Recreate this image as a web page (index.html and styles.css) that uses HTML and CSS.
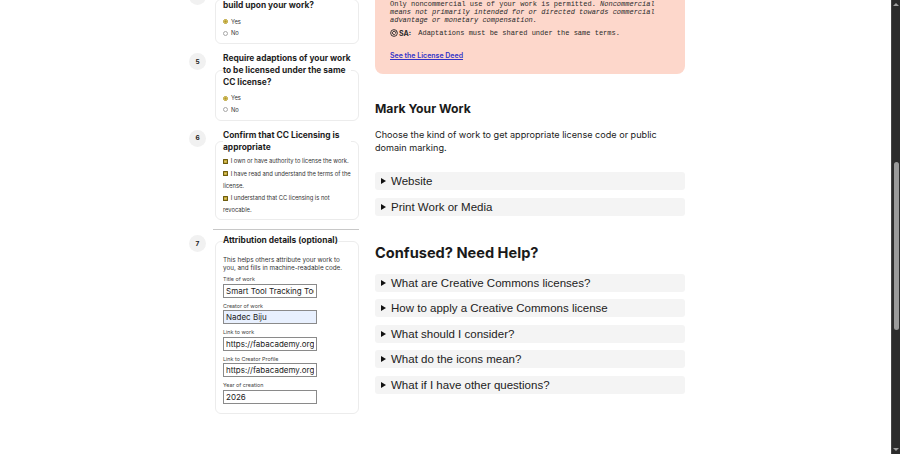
FILE: index.html
```html
<!DOCTYPE html>
<html lang="en">
<head>
  <meta charset="UTF-8">
  <meta name="viewport" content="width=device-width, initial-scale=1">
  <title>License Chooser</title>
  <link rel="stylesheet" href="styles.css">
</head>
<body>
  <div class="screen">
    <div class="viewport">
      <main class="chooser">

        <section class="steps">
          <div class="step">
            <span class="num">4</span>
            <fieldset class="card">
              <legend>Allow others to remix and<br>build upon your work?</legend>
              <label class="opt"><input type="radio" name="adapt" checked> Yes</label>
              <label class="opt"><input type="radio" name="adapt"> No</label>
            </fieldset>
          </div>

          <div class="step">
            <span class="num">5</span>
            <fieldset class="card">
              <legend>Require adaptions of your work to be licensed under the same CC license?</legend>
              <label class="opt"><input type="radio" name="share" checked> Yes</label>
              <label class="opt"><input type="radio" name="share"> No</label>
            </fieldset>
          </div>

          <div class="step">
            <span class="num">6</span>
            <fieldset class="card confirm">
              <legend>Confirm that CC Licensing is appropriate</legend>
              <label class="opt check"><input type="checkbox" checked> I own or have authority to license the work.</label>
              <label class="opt check"><input type="checkbox" checked> I have read and understand the terms of the license.</label>
              <label class="opt check"><input type="checkbox" checked> I understand that CC licensing is not revocable.</label>
            </fieldset>
          </div>

          <hr class="sep">

          <div class="step">
            <span class="num">7</span>
            <fieldset class="card attrib">
              <legend>Attribution details (optional)</legend>
              <p class="hint">This helps others attribute your work to you, and fills in machine-readable code.</p>
              <label class="field">Title of work<input type="text" value="Smart Tool Tracking Tool"></label>
              <label class="field">Creator of work<input type="text" class="filled" value="Nadec Biju"></label>
              <label class="field">Link to work<input type="text" value="https://fabacademy.org"></label>
              <label class="field">Link to Creator Profile<input type="text" value="https://fabacademy.org"></label>
              <label class="field">Year of creation<input type="text" value="2026"></label>
            </fieldset>
          </div>
        </section>

        <section class="result">
          <div class="deed">
            <p class="cond"><span class="ic"><svg viewBox="0 0 10 10"><circle cx="5" cy="5" r="4.2"/><circle cx="5" cy="3" r="0.9" class="fill"/><path d="M3.8 4.5h2.4v2H5.6v1.8H4.4V6.5H3.8z" class="fill"/></svg></span><b>BY:</b> Credit must be given to you, the creator.</p>
            <p class="cond nc"><span class="ic"><svg viewBox="0 0 10 10"><circle cx="5" cy="5" r="4.2"/><text x="5" y="6.8" class="fill">$</text></svg></span><b>NC:</b></p>
            <p class="text">Only noncommercial use of your work is permitted. <i>Noncommercial means not primarily intended for or directed towards commercial advantage or monetary compensation.</i></p>
            <p class="cond sa"><span class="ic"><svg viewBox="0 0 10 10"><circle cx="5" cy="5" r="4.2"/><path d="M6.9 5.6A2 2 0 1 1 6.9 4.2"/><path d="M6 3.3l1 1.1 0.9-1.3" /></svg></span><b>SA:</b> Adaptations must be shared under the same terms.</p>
            <a class="deed-link" href="#">See the License Deed</a>
          </div>

          <h2>Mark Your Work</h2>
          <p class="lead">Choose the kind of work to get appropriate license code or public domain marking.</p>
          <details><summary>Website</summary></details>
          <details><summary>Print Work or Media</summary></details>

          <h2 class="help">Confused? Need Help?</h2>
          <details><summary>What are Creative Commons licenses?</summary></details>
          <details><summary>How to apply a Creative Commons license</summary></details>
          <details><summary>What should I consider?</summary></details>
          <details><summary>What do the icons mean?</summary></details>
          <details><summary>What if I have other questions?</summary></details>
        </section>

      </main>
    </div>

    <div class="scrollbar">
      <span class="arrow up"></span>
      <span class="track"><span class="thumb"></span></span>
      <span class="arrow down"></span>
    </div>
  </div>
</body>
</html>
```

FILE: styles.css
```css
html, body {
  margin: 0;
  height: 100%;
}
body {
  font-family: Inter, "Noto Sans", sans-serif;
  color: #222;
  background: #fff;
  overflow: hidden;
}
.screen {
  display: flex;
  height: 454px;
}
.viewport {
  flex: 1;
  overflow: hidden;
}
.chooser {
  display: grid;
  grid-template-columns: 170px 310px;
  column-gap: 16px;
  padding-left: 189px;
  align-items: start;
}

/* left column: steps */
.steps {
  margin-top: -12px;
}
.step {
  display: flex;
  gap: 9px;
  align-items: flex-start;
  margin-bottom: 9px;
}
.num {
  flex: none;
  width: 17px;
  height: 17px;
  border-radius: 50%;
  background: #f1f1f1;
  font-size: 6.5px;
  font-weight: bold;
  display: flex;
  align-items: center;
  justify-content: center;
}
.card {
  flex: 1;
  min-width: 0;
  margin: 0;
  padding: 0 7px 4px;
  border: 1px solid #ececec;
  border-radius: 6px;
}
.card legend {
  padding: 0;
  font-size: 8.4px;
  font-weight: bold;
  line-height: 11.8px;
  color: #1e1e1e;
}
.opt {
  display: flex;
  align-items: center;
  gap: 2px;
  font-size: 5.8px;
  line-height: 11.7px;
  color: #333;
}
.card legend + .opt {
  margin-top: 4px;
}
.opt input {
  appearance: none;
  width: 5px;
  height: 5px;
  margin: 0 1px 0 0;
  flex: none;
  box-sizing: border-box;
  border: 0.7px solid #a8a8a8;
  border-radius: 50%;
  background: #fff;
}
.opt input[type="radio"]:checked {
  border-color: #b59b25;
  background: radial-gradient(circle, #b59b25 0 45%, #f4e7a8 55%);
}
.check {
  display: block;
  line-height: 12.2px;
}
.card.confirm legend + .opt {
  margin-top: 2px;
}
.card.confirm {
  padding-bottom: 3px;
}
.check input[type="checkbox"] {
  display: inline-block;
  vertical-align: -0.5px;
  border: 0.6px solid #6d5c10;
  border-radius: 0.5px;
  background: #c2a52c url("data:image/svg+xml,%3Csvg xmlns='http://www.w3.org/2000/svg' viewBox='0 0 10 10'%3E%3Cpath d='M2.2 5.2l2 2 3.8-4.2' fill='none' stroke='white' stroke-width='1.8'/%3E%3C/svg%3E") center / 100% 100% no-repeat;
}
.sep {
  margin: 0 0 5px 24px;
  border: 0;
  border-top: 1px solid #c8c8c8;
}
.attrib {
  padding-bottom: 9px;
}
.hint {
  margin: 9px 0 4px;
  font-size: 6.3px;
  line-height: 8px;
  color: #333;
}
.field {
  display: block;
  font-size: 5.4px;
  line-height: 7.5px;
  color: #444;
  margin-bottom: 5px;
}
.field input {
  display: block;
  box-sizing: border-box;
  width: 94px;
  height: 14px;
  margin: 0;
  padding: 0 2px;
  border: 1px solid #8a8a8a;
  border-radius: 0;
  font-family: Inter, "Noto Sans", sans-serif;
  font-size: 8px;
  color: #222;
  background: #fff;
}
.field input.filled {
  background: #e8f0fe;
}
.field:last-child {
  margin-bottom: 0;
}

/* right column */
.result {
  margin-top: -35px;
}
.deed {
  background: #fdd7cb;
  border-radius: 0 0 8px 8px;
  padding: 10px 15px 14px;
  font-family: "Liberation Mono", monospace;
  font-size: 7px;
  color: #2a2a2a;
}
.deed p {
  margin: 0;
}
.cond {
  display: flex;
  align-items: center;
  height: 10px;
  white-space: pre;
}
.cond b {
  font-family: Inter, sans-serif;
  margin-right: 3px;
}
.cond.nc {
  margin-top: 5px;
}
.cond.sa {
  margin-top: 4px;
}
.ic {
  width: 8px;
  height: 8px;
  margin-right: 1px;
}
.ic svg {
  display: block;
  width: 8px;
  height: 8px;
  fill: none;
  stroke: #222;
  stroke-width: 1.1;
}
.ic .fill {
  fill: #222;
  stroke: none;
  font-size: 5px;
  text-anchor: middle;
  font-family: "Liberation Sans", sans-serif;
  font-weight: bold;
}
.text {
  line-height: 8px;
}
.deed-link {
  display: block;
  margin-top: 14px;
  font-family: Inter, sans-serif;
  font-weight: 600;
  font-size: 7px;
  line-height: 8px;
  color: #3434c8;
}
h2 {
  margin: 27px 0 0;
  font-size: 12.2px;
  line-height: 16px;
  color: #1a1a1a;
}
.lead {
  margin: 11px 0 18px;
  font-size: 9.1px;
  line-height: 13px;
  color: #222;
}
details {
  margin-bottom: 7.5px;
  background: #f4f4f4;
  border-radius: 3px;
}
summary {
  display: flex;
  align-items: center;
  height: 18px;
  padding-left: 6px;
  font-family: "Liberation Sans", Arial, sans-serif;
  font-size: 11.5px;
  color: #222;
  list-style: none;
}
summary::-webkit-details-marker {
  display: none;
}
summary::before {
  content: "";
  width: 0;
  height: 0;
  margin-right: 5px;
  border-left: 5px solid #111;
  border-top: 3px solid transparent;
  border-bottom: 3px solid transparent;
}
h2.help {
  margin-top: 29px;
  margin-bottom: 12px;
  font-size: 14.6px;
  line-height: 17px;
}

/* fake window scrollbar */
.scrollbar {
  flex: none;
  width: 8px;
  background: #2c2c2c;
  border-left: 1px solid #444;
  display: flex;
  flex-direction: column;
  align-items: center;
}
.arrow {
  flex: none;
  width: 0;
  height: 0;
  margin: 3px 0;
  border-left: 3px solid transparent;
  border-right: 3px solid transparent;
}
.arrow.up {
  border-bottom: 3px solid #a0a0a0;
}
.arrow.down {
  border-top: 3px solid #a0a0a0;
}
.track {
  flex: 1;
  width: 100%;
  display: flex;
  justify-content: center;
  padding-top: 153px;
}
.thumb {
  width: 5px;
  height: 168px;
  border-radius: 3px;
  background: #9b9b9b;
}
```
